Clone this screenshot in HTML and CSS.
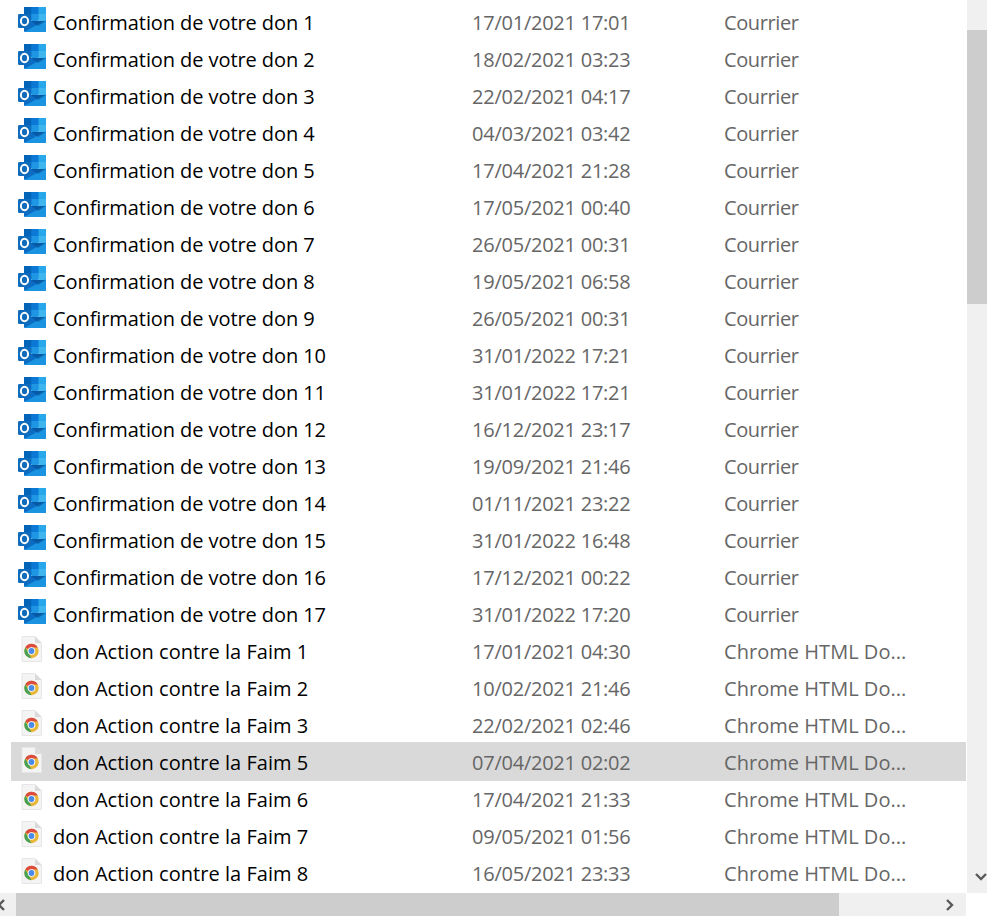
FILE: index.html
```html
<!DOCTYPE html>
<html lang="fr">
<head>
<meta charset="utf-8">
<title>Fichiers</title>
<link rel="stylesheet" href="styles.css">
</head>
<body>
<svg class="defs" width="0" height="0" aria-hidden="true">
<symbol id="outlook" viewBox="0 0 28 25">
<rect x="6" y="0" width="22" height="13" fill="#0a78d4"/>
<rect x="6" y="0" width="7.500" height="7" fill="#0364b8"/>
<rect x="13.500" y="0" width="7" height="7" fill="#0a78d4"/>
<rect x="20.500" y="0" width="7.500" height="7" fill="#28a8ea"/>
<rect x="6" y="7" width="7.500" height="7" fill="#0a78d4"/>
<rect x="13.500" y="7" width="7" height="7" fill="#1f96e4"/>
<rect x="20.500" y="7" width="7.500" height="7" fill="#3fb6ee"/>
<path d="M6 14h22v10a1 1 0 0 1-1 1H7a1 1 0 0 1-1-1z" fill="#0a6cc4"/>
<path d="M6 25 28 13v11a1 1 0 0 1-1 1z" fill="#1a94e0"/>
<path d="M13 14h15l-8 5z" fill="#064a8c" opacity=".55"/>
<rect x="0" y="7" width="13" height="14" rx="1.200" fill="#0f6cbd"/>
<ellipse cx="6.500" cy="14" rx="3.600" ry="4.200" fill="none" stroke="#fff" stroke-width="2"/>
</symbol>
<symbol id="chrome" viewBox="0 0 21 26">
<path d="M1 .5h13l6.500 6.500v18.500H1z" fill="#f4f4f4" stroke="#e6e6e6"/>
<path d="M14 .5V7h6.500z" fill="#dadada"/>
<circle cx="10.500" cy="15" r="7.200" fill="#e8b83a"/>
<path d="M10.500 7.800a7.200 7.200 0 0 1 6.240 3.600H10.500a3.600 3.600 0 0 0-3.120 1.800L4.260 11.400A7.200 7.200 0 0 1 10.500 7.800z" fill="#db4b3f"/>
<path d="M3.300 15a7.200 7.200 0 0 1 .96-3.600l3.120 5.400 3.120 5.400A7.200 7.200 0 0 1 3.300 15z" fill="#46a055"/>
<circle cx="10.500" cy="15" r="3.800" fill="#fff"/>
<circle cx="10.500" cy="15" r="2.900" fill="#4a8ae8"/>
</symbol>
</svg>
<div class="window">
<div class="top">
<main class="list" id="list">
<div class="row mail"><svg class="icon outlook"><use href="#outlook"/></svg><span class="name">Confirmation de votre don 1</span><span class="date">17/01/2021 17:01</span><span class="type">Courrier</span></div>
<div class="row mail"><svg class="icon outlook"><use href="#outlook"/></svg><span class="name">Confirmation de votre don 2</span><span class="date">18/02/2021 03:23</span><span class="type">Courrier</span></div>
<div class="row mail"><svg class="icon outlook"><use href="#outlook"/></svg><span class="name">Confirmation de votre don 3</span><span class="date">22/02/2021 04:17</span><span class="type">Courrier</span></div>
<div class="row mail"><svg class="icon outlook"><use href="#outlook"/></svg><span class="name">Confirmation de votre don 4</span><span class="date">04/03/2021 03:42</span><span class="type">Courrier</span></div>
<div class="row mail"><svg class="icon outlook"><use href="#outlook"/></svg><span class="name">Confirmation de votre don 5</span><span class="date">17/04/2021 21:28</span><span class="type">Courrier</span></div>
<div class="row mail"><svg class="icon outlook"><use href="#outlook"/></svg><span class="name">Confirmation de votre don 6</span><span class="date">17/05/2021 00:40</span><span class="type">Courrier</span></div>
<div class="row mail"><svg class="icon outlook"><use href="#outlook"/></svg><span class="name">Confirmation de votre don 7</span><span class="date">26/05/2021 00:31</span><span class="type">Courrier</span></div>
<div class="row mail"><svg class="icon outlook"><use href="#outlook"/></svg><span class="name">Confirmation de votre don 8</span><span class="date">19/05/2021 06:58</span><span class="type">Courrier</span></div>
<div class="row mail"><svg class="icon outlook"><use href="#outlook"/></svg><span class="name">Confirmation de votre don 9</span><span class="date">26/05/2021 00:31</span><span class="type">Courrier</span></div>
<div class="row mail"><svg class="icon outlook"><use href="#outlook"/></svg><span class="name">Confirmation de votre don 10</span><span class="date">31/01/2022 17:21</span><span class="type">Courrier</span></div>
<div class="row mail"><svg class="icon outlook"><use href="#outlook"/></svg><span class="name">Confirmation de votre don 11</span><span class="date">31/01/2022 17:21</span><span class="type">Courrier</span></div>
<div class="row mail"><svg class="icon outlook"><use href="#outlook"/></svg><span class="name">Confirmation de votre don 12</span><span class="date">16/12/2021 23:17</span><span class="type">Courrier</span></div>
<div class="row mail"><svg class="icon outlook"><use href="#outlook"/></svg><span class="name">Confirmation de votre don 13</span><span class="date">19/09/2021 21:46</span><span class="type">Courrier</span></div>
<div class="row mail"><svg class="icon outlook"><use href="#outlook"/></svg><span class="name">Confirmation de votre don 14</span><span class="date">01/11/2021 23:22</span><span class="type">Courrier</span></div>
<div class="row mail"><svg class="icon outlook"><use href="#outlook"/></svg><span class="name">Confirmation de votre don 15</span><span class="date">31/01/2022 16:48</span><span class="type">Courrier</span></div>
<div class="row mail"><svg class="icon outlook"><use href="#outlook"/></svg><span class="name">Confirmation de votre don 16</span><span class="date">17/12/2021 00:22</span><span class="type">Courrier</span></div>
<div class="row mail"><svg class="icon outlook"><use href="#outlook"/></svg><span class="name">Confirmation de votre don 17</span><span class="date">31/01/2022 17:20</span><span class="type">Courrier</span></div>
<div class="row"><svg class="icon chrome"><use href="#chrome"/></svg><span class="name">don Action contre la Faim 1</span><span class="date">17/01/2021 04:30</span><span class="type">Chrome HTML Do...</span></div>
<div class="row"><svg class="icon chrome"><use href="#chrome"/></svg><span class="name">don Action contre la Faim 2</span><span class="date">10/02/2021 21:46</span><span class="type">Chrome HTML Do...</span></div>
<div class="row"><svg class="icon chrome"><use href="#chrome"/></svg><span class="name">don Action contre la Faim 3</span><span class="date">22/02/2021 02:46</span><span class="type">Chrome HTML Do...</span></div>
<div class="row selected"><svg class="icon chrome"><use href="#chrome"/></svg><span class="name">don Action contre la Faim 5</span><span class="date">07/04/2021 02:02</span><span class="type">Chrome HTML Do...</span></div>
<div class="row"><svg class="icon chrome"><use href="#chrome"/></svg><span class="name">don Action contre la Faim 6</span><span class="date">17/04/2021 21:33</span><span class="type">Chrome HTML Do...</span></div>
<div class="row"><svg class="icon chrome"><use href="#chrome"/></svg><span class="name">don Action contre la Faim 7</span><span class="date">09/05/2021 01:56</span><span class="type">Chrome HTML Do...</span></div>
<div class="row"><svg class="icon chrome"><use href="#chrome"/></svg><span class="name">don Action contre la Faim 8</span><span class="date">16/05/2021 23:33</span><span class="type">Chrome HTML Do...</span></div>
</main>
<aside class="vbar">
<div class="vthumb"></div>
<div class="vspace"></div>
<svg class="arrow-down" viewBox="0 0 12 8"><path d="M1 1l5 5 5-5" fill="none" stroke="#5a5a5a" stroke-width="2.400"/></svg>
</aside>
</div>
<footer class="hbar">
<div class="hleft"><svg class="arrow-h prev" viewBox="0 0 8 12"><path d="M7 1 2 6l5 5" fill="none" stroke="#5a5a5a" stroke-width="2.400"/></svg></div>
<div class="hthumb"></div>
<div class="hright"><svg class="arrow-h" viewBox="0 0 8 12"><path d="M1 1l5 5-5 5" fill="none" stroke="#5a5a5a" stroke-width="2.400"/></svg></div>
<div class="corner"></div>
</footer>
</div>
</body>
</html>
```
FILE: styles.css
```css
* { box-sizing: border-box; }
html, body { margin: 0; padding: 0; background: #fff; }
.defs { position: absolute; }
.window { width: 987px; height: 916px; display: flex; flex-direction: column; overflow: hidden; }
.top { flex: 1; display: flex; min-height: 0; }
.list { flex: 1; min-width: 0; margin-right: 1px; padding: 4px 0 0 11px; overflow: hidden; font-family: "Open Sans", "Noto Sans", sans-serif; font-size: 20px; }
.row { height: 37px; display: flex; align-items: center; white-space: nowrap; }
.row.selected { height: 39px; margin-top: -2px; padding-top: 2px; background: #d9d9d9; }
.icon { flex: none; width: 28px; height: 25px; margin: -6px 7px 0 7px; }
.icon.chrome { width: 21px; height: 26px; margin: -5px 11px 0 10px; }
.name { width: 419px; color: #000; letter-spacing: 0.04px; }
.mail .name { letter-spacing: -0.08px; }
.date { width: 252px; color: #666; letter-spacing: -0.24px; }
.type { color: #666; letter-spacing: 0.04px; }
.mail .type { letter-spacing: -0.4px; }
.vbar { flex: none; width: 20px; background: #f0f0f0; display: flex; flex-direction: column; align-items: flex-end; }
.vthumb { width: 20px; height: 274px; margin-top: 30px; background: #cdcdcd; }
.vspace { flex: 1; }
.arrow-down { width: 12px; height: 8px; margin-bottom: 12px; }
.hbar { flex: none; height: 23px; display: flex; }
.hleft { width: 16px; display: flex; align-items: center; background: #f0f0f0; overflow: hidden; }
.hthumb { width: 823px; background: #cdcdcd; }
.hright { flex: 1; display: flex; align-items: center; justify-content: flex-end; padding-right: 12px; background: #f0f0f0; }
.corner { width: 21px; background: #fff; }
.arrow-h { width: 8px; height: 12px; }
.arrow-h.prev { margin-left: -3px; }
```
